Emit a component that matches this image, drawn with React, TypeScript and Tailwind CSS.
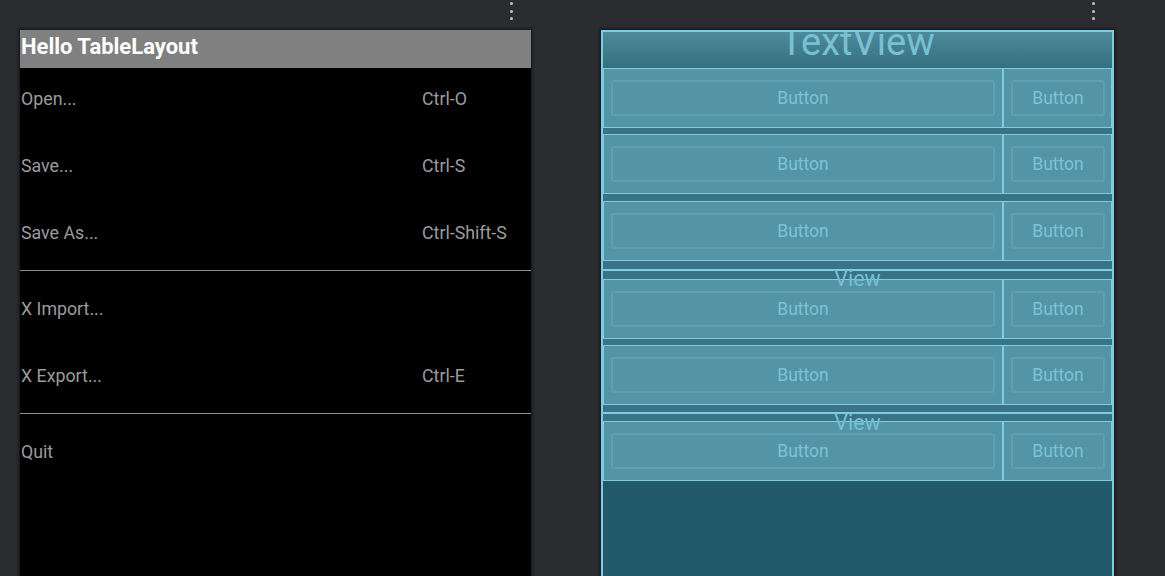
import React from 'react'

type MenuRow = { label: string; shortcut: string } | 'divider'

const MENU: MenuRow[] = [
  { label: 'Open...', shortcut: 'Ctrl-O' },
  { label: 'Save...', shortcut: 'Ctrl-S' },
  { label: 'Save As...', shortcut: 'Ctrl-Shift-S' },
  'divider',
  { label: 'X Import...', shortcut: '' },
  { label: 'X Export...', shortcut: 'Ctrl-E' },
  'divider',
  { label: 'Quit', shortcut: '' },
]

// blueprint rows: 'row' = table row, gap = plain spacing, view = separator view
type BlueItem = { kind: 'row' } | { kind: 'gap'; h: string } | { kind: 'view'; h: string }

const BLUEPRINT: BlueItem[] = [
  { kind: 'row' },
  { kind: 'gap', h: 'h-[6px]' },
  { kind: 'row' },
  { kind: 'gap', h: 'h-[7px]' },
  { kind: 'row' },
  { kind: 'view', h: 'h-[18px]' },
  { kind: 'row' },
  { kind: 'gap', h: 'h-[6px]' },
  { kind: 'row' },
  { kind: 'view', h: 'h-[16px]' },
  { kind: 'row' },
]

function Dots() {
  return (
    <div className="flex flex-col gap-[4.5px] pt-[2px]">
      <div className="w-[3px] h-[3px] rounded-full bg-[#c4c4c4]" />
      <div className="w-[3px] h-[3px] rounded-full bg-[#c4c4c4]" />
      <div className="w-[3px] h-[3px] rounded-full bg-[#c4c4c4]" />
    </div>
  )
}

function BlueButton({ className }: { className: string }) {
  return (
    <div className={`border border-[#7fcbe0] ${className}`}>
      <div className="h-full border-2 border-[#5e9fb2] rounded-[3px] flex items-center justify-center text-[17.5px] text-[#7cc3d6]">
        Button
      </div>
    </div>
  )
}

function MenuPreview() {
  return (
    <div className="flex-1 flex flex-col bg-black shadow-[0_0_2px_2px_rgba(0,0,0,0.35)]">
      <div className="h-[38px] bg-[#808080] pl-px pt-[5px] text-[22px] leading-[24px] font-bold text-white">
        Hello TableLayout
      </div>
      {MENU.map((row, i) =>
        row === 'divider' ? (
          <div key={i} className="h-[9px] pt-px">
            <div className="h-px bg-[#8c8c8c]" />
          </div>
        ) : (
          <div key={i} className="h-[67px] grid grid-cols-[401px_1fr] pl-px pt-[21px] text-[17.8px] leading-[20px] text-[#9b9b9b]">
            <span>{row.label}</span>
            <span>{row.shortcut}</span>
          </div>
        )
      )}
    </div>
  )
}

function BlueprintPreview() {
  return (
    <div className="flex-1 flex flex-col bg-[#225a6c] border-x-2 border-t-2 border-[#7fcbe0] shadow-[0_0_2px_2px_rgba(0,0,0,0.35)]">
      <div className="h-[36px] overflow-hidden bg-linear-to-b from-[#4d8a9b] to-[#35707f] flex justify-center">
        <span className="-mt-[9px] text-[38px] leading-[38px] text-[#78c0d3]">TextView</span>
      </div>
      <div className="flex flex-col bg-[#397386]">
        {BLUEPRINT.map((item, i) => {
          if (item.kind === 'row') {
            return (
              <div key={i} className="flex h-[60px] bg-[#5394a7]">
                <BlueButton className="w-[400px] px-[7px] py-[11px]" />
                <BlueButton className="flex-1 pl-[7px] pr-[6px] py-[11px]" />
              </div>
            )
          }
          if (item.kind === 'gap') return <div key={i} className={item.h} />
          return (
            <div key={i} className={`relative z-10 flex items-center ${item.h}`}>
              <div className="h-[2px] w-full bg-[#7fcbe0]" />
              <span className="absolute left-1/2 -translate-x-1/2 top-[6px] text-[21.5px] leading-[23px] text-[#78bfd2]">
                View
              </span>
            </div>
          )
        })}
      </div>
    </div>
  )
}

export default function App() {
  return (
    <div className="h-[576px] overflow-hidden bg-[#2b2c30] flex gap-[70px] pl-[20px] font-['Roboto',sans-serif]">
      <div className="w-[511px] flex flex-col">
        <div className="h-[30px] flex justify-end pr-[18px]">
          <Dots />
        </div>
        <MenuPreview />
      </div>
      <div className="w-[513px] flex flex-col">
        <div className="h-[30px] flex justify-end pr-[19px]">
          <Dots />
        </div>
        <BlueprintPreview />
      </div>
    </div>
  )
}
